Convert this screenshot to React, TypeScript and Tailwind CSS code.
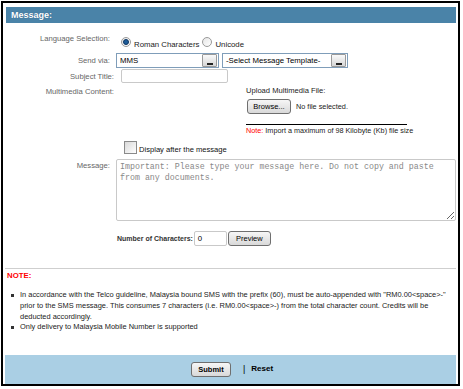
import React from 'react'

// Fake Windows-style select with a little drop button on the right
function SelectBox({ value, width }: { value: string; width: string }) {
  return (
    <div className={`${width} h-[15px] flex items-center border border-[#7f9db9] bg-white`}>
      <span className="flex-1 pl-[3px] text-[7.8px] leading-none text-black whitespace-nowrap">{value}</span>
      <div className="w-[15px] h-[13px] mr-px border border-[#9a9a9a] rounded-[1px] bg-gradient-to-b from-[#fafafa] to-[#d6d6d6] flex items-end justify-center pb-[1px]">
        <div className="w-[6px] h-[2px] bg-[#222]" />
      </div>
    </div>
  )
}

function Radio({ checked }: { checked?: boolean }) {
  return (
    <div className="w-[10px] h-[10px] rounded-full border border-[#9a9a9a] bg-gradient-to-br from-[#e6e6e6] to-white flex items-center justify-center">
      {checked && <div className="w-[6px] h-[6px] rounded-full bg-[#1e5d9a] border border-[#0c3562]" />}
    </div>
  )
}

function Button({ label, width, bold }: { label: string; width: string; bold?: boolean }) {
  return (
    <div
      className={`${width} h-[15px] flex items-center justify-center rounded-[3px] border border-[#6f6f6f] bg-gradient-to-b from-[#f6f6f6] to-[#d9d9d9] text-[7.5px] leading-none text-black ${bold ? 'font-bold' : ''}`}
    >
      {label}
    </div>
  )
}

export default function App() {
  return (
    <div className="pl-px pt-px bg-white" style={{ fontFamily: '"Liberation Sans", Arial, sans-serif' }}>
      <div className="w-[459px] h-[385px] border-2 border-black flex flex-col pt-[4px] px-[2px]">
        {/* Header */}
        <div className="ml-px h-[16px] bg-[#4a83a8] flex items-center px-[5px]">
          <span className="text-[9px] font-bold text-white leading-none [text-shadow:0_0_1px_#2a5a80]">Message:</span>
        </div>

        {/* Language selection */}
        <div className="mt-[11px] h-[14px] flex items-start">
          <div className="w-[105px] text-right text-[7.7px] leading-[10px] text-[#666]">Language Selection:</div>
          <div className="ml-[11px] flex items-start">
            <div className="mt-[3px]"><Radio checked /></div>
            <span className="ml-[3px] mt-[6px] text-[7.8px] leading-[10px] text-[#222]">Roman Characters</span>
            <div className="ml-[3px] mt-[3px]"><Radio /></div>
            <span className="ml-[3px] mt-[6px] text-[7.8px] leading-[10px] text-[#222]">Unicode</span>
          </div>
        </div>

        {/* Send via */}
        <div className="mt-[5px] h-[15px] flex items-start">
          <div className="w-[105px] pt-[3px] text-right text-[7.7px] leading-[10px] text-[#666]">Send via:</div>
          <div className="ml-[6px] flex gap-[3px]">
            <SelectBox value="MMS" width="w-[103px]" />
            <SelectBox value="-Select Message Template-" width="w-[126px]" />
          </div>
        </div>

        {/* Subject */}
        <div className="mt-px h-[15px] flex items-start">
          <div className="w-[109px] pt-[3px] text-right text-[7.7px] leading-[10px] text-[#666]">Subject Title:</div>
          <div className="ml-[7px] w-[107px] h-[14px] border border-[#c9c9c9] rounded-[2px] bg-white" />
        </div>

        {/* Multimedia */}
        <div className="flex items-start">
          <div className="w-[109px] pt-[3px] text-right text-[7.7px] leading-[10px] text-[#666]">Multimedia Content:</div>
          <div className="ml-[132px] pt-[2px] flex flex-col">
            <span className="text-[7.6px] leading-[10px] text-[#222]">Upload Multimedia File:</span>
            <div className="mt-[3px] ml-px flex items-center">
              <Button label="Browse..." width="w-[44px]" />
              <span className="ml-[5px] text-[7.3px] leading-none text-[#222]">No file selected.</span>
            </div>
            <div className="mt-[10px] w-[161px] h-px bg-black" />
            <div className="mt-px text-[7.25px] leading-[10px] text-[#222] whitespace-nowrap">
              <span className="text-[#ff0000]">Note:</span> Import a maximum of 98 Kilobyte (Kb) file size
            </div>
          </div>
        </div>

        {/* Display after */}
        <div className="mt-[5px] ml-[119px] h-[13px] flex items-start">
          <div className="w-[13px] h-[13px] border border-[#8a8a8a] bg-gradient-to-br from-[#d9d9d9] to-white" />
          <span className="ml-[2px] mt-[4px] text-[7.6px] leading-[10px] text-[#111]">Display after the message</span>
        </div>

        {/* Message */}
        <div className="mt-[5px] flex items-start">
          <div className="w-[105px] pt-[2px] text-right text-[7.7px] leading-[10px] text-[#666]">Message:</div>
          <textarea
            readOnly
            placeholder="Important: Please type your message here. Do not copy and paste from any documents."
            className="ml-[6px] w-[340px] h-[62px] border border-[#c9c9c9] rounded-[2px] bg-white px-[3px] pt-[2px] text-[8.3px] leading-[10.7px] text-[#777] placeholder:text-[#888] outline-none"
            style={{ fontFamily: '"Liberation Mono", "Courier New", monospace' }}
          />
        </div>

        {/* Number of characters */}
        <div className="mt-[10px] ml-[112px] h-[15px] flex items-center">
          <span className="text-[7px] font-bold leading-none text-[#333]">Number of Characters:</span>
          <div className="ml-px w-[33px] h-[15px] border border-[#c9c9c9] rounded-[2px] bg-white flex items-center pl-[3px] text-[7.8px] leading-none text-black">0</div>
          <div className="ml-px"><Button label="Preview" width="w-[43px]" /></div>
        </div>

        <div className="mt-[22px] h-px bg-[#cfcfcf]" />

        {/* Notes */}
        <div className="mt-[2px] pl-[2px] text-[7.8px] leading-[10px] font-bold text-[#ff0000]">NOTE:</div>
        <ul className="mt-[9px] pl-[6px] text-[7.45px] leading-[10.8px] text-[#222]">
          <li className="flex items-start">
            <span className="mt-[4px] w-[3px] h-[3px] bg-[#333] shrink-0" />
            <span className="ml-[6px] whitespace-nowrap">
              In accordance with the Telco guideline, Malaysia bound SMS with the prefix (60), must be auto-appended with "RM0.00&lt;space&gt;-"
              <br />
              prior to the SMS message. This consumes 7 characters (i.e. RM0.00&lt;space&gt;-) from the total character count. Credits will be
              <br />
              deducted accordingly.
            </span>
          </li>
          <li className="flex items-start">
            <span className="mt-[4px] w-[3px] h-[3px] bg-[#333] shrink-0" />
            <span className="ml-[6px] whitespace-nowrap">Only delivery to Malaysia Mobile Number is supported</span>
          </li>
        </ul>

        {/* Footer */}
        <div className="mt-auto h-[29px] bg-[#aacfe4] flex items-start pt-[7px] pl-[186px]">
          <Button label="Submit" width="w-[40px]" bold />
          <span className="ml-[12px] mt-[2px] text-[9px] leading-[10px] text-black">|</span>
          <span className="ml-[6px] mt-[2px] text-[8px] leading-[10px] font-bold text-black">Reset</span>
        </div>
      </div>
    </div>
  )
}
